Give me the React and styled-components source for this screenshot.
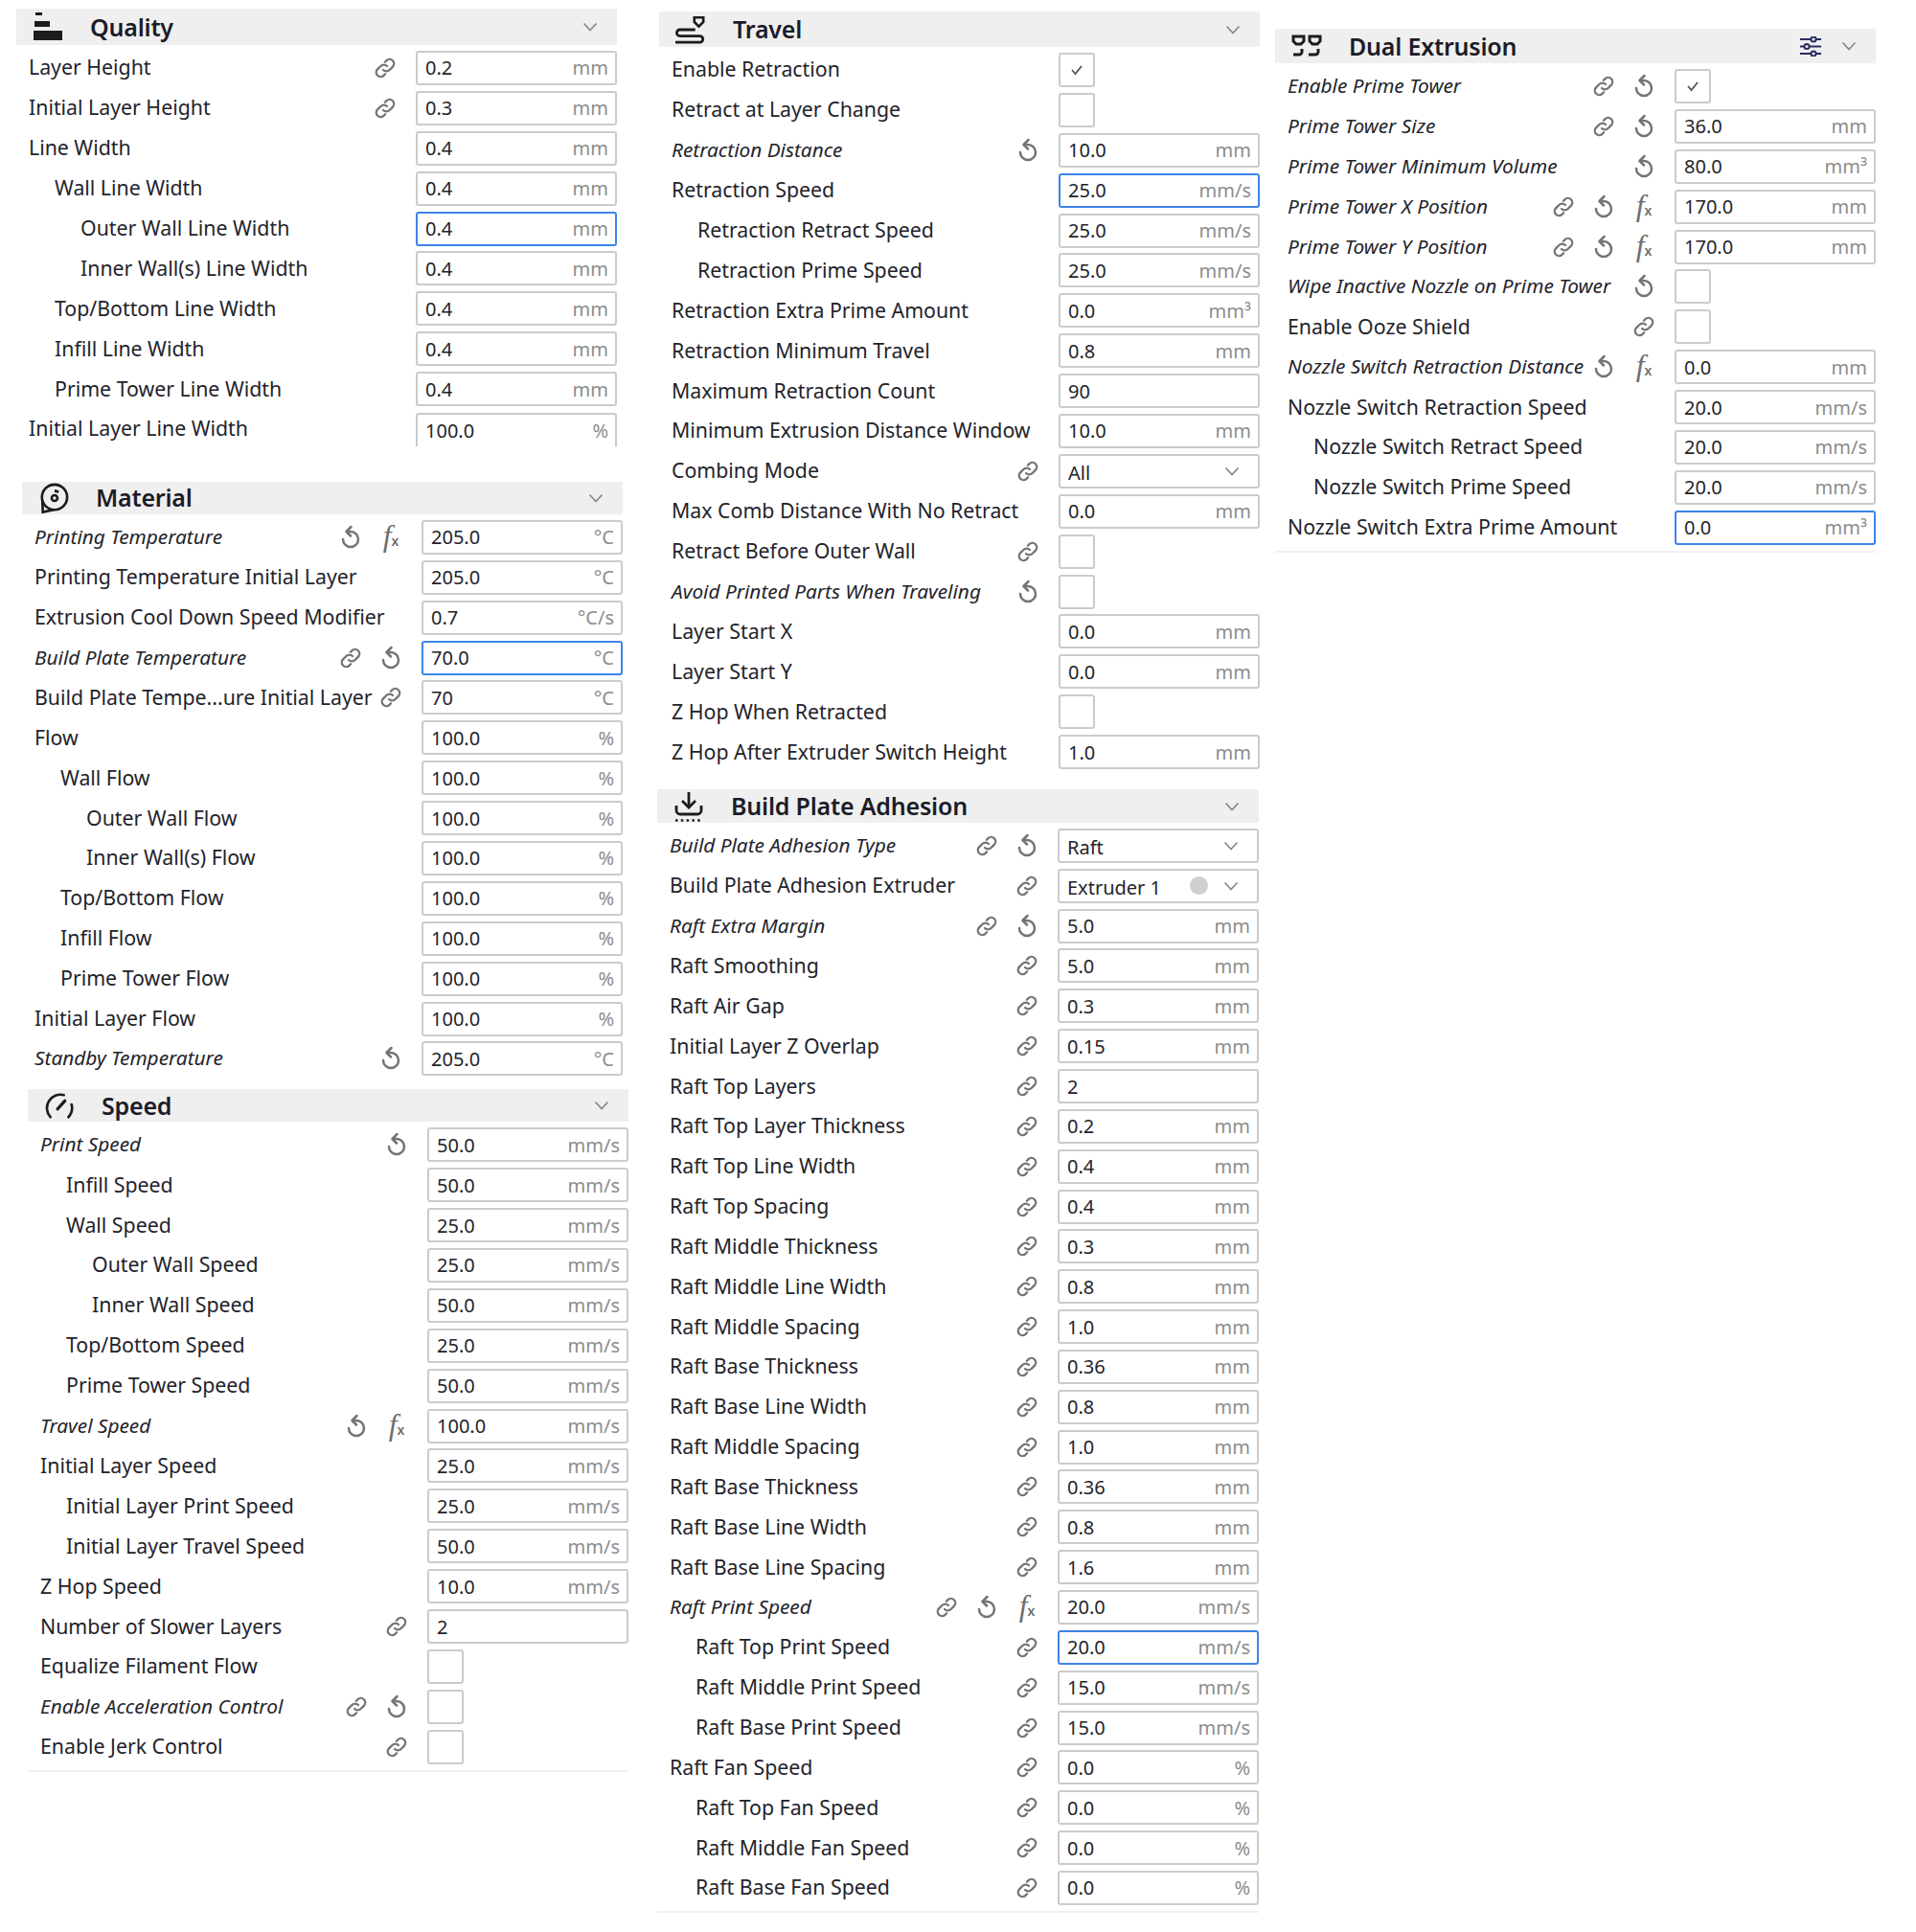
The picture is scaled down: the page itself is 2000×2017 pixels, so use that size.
import React from 'react';
import styled, { createGlobalStyle } from 'styled-components';

const GlobalStyle = createGlobalStyle`
  html, body { margin: 0; padding: 0; background: #fff; }
  body { font-family: "Noto Sans", "Open Sans", sans-serif; color: #23232b; }
`;

const Page = styled.div`
  display: flex;
  width: 2000px;
  height: 2017px;
  overflow: hidden;
  background: #fff;
`;

const Column = styled.div`
  display: flex;
  flex-direction: column;
  width: ${(p) => p.$width}px;
  flex: none;
`;

const Section = styled.section`
  width: ${(p) => p.$width}px;
  margin-left: ${(p) => p.$left}px;
  margin-top: ${(p) => p.$top}px;
  padding-bottom: ${(p) => (p.$ruled ? 3 : 0)}px;
  border-bottom: ${(p) => (p.$ruled ? '2px solid #f0f0f0' : 'none')};
`;

const Header = styled.header`
  display: flex;
  align-items: center;
  height: ${(p) => p.$height}px;
  margin-bottom: 3px;
  background: #efefef;
  color: #1c1c28;
`;

const HeaderIcon = styled.span`
  display: flex;
  align-items: center;
  justify-content: center;
  width: 32px;
  margin-left: 17px;
  margin-right: 28px;
`;

const Title = styled.h2`
  flex: 1;
  margin: 0;
  font-size: 25px;
  font-weight: 600;
  line-height: 1;
  letter-spacing: -0.2px;
`;

const HeaderTool = styled.span`
  display: flex;
  margin-right: 21px;
  color: #262c5e;
`;

const Chevron = styled.svg`
  flex: none;
  width: 16px;
  height: 10px;
  margin-right: ${(p) => p.$right}px;
  fill: none;
  stroke: #8a8a8a;
  stroke-width: 1.8;
`;

const Row = styled.div`
  display: flex;
  align-items: center;
  height: ${(p) => p.$pitch}px;
`;

const Label = styled.span`
  flex: 1;
  min-width: 0;
  padding-left: ${(p) => 13 + p.$level * 27}px;
  padding-bottom: 2px;
  font-size: ${(p) => (p.$italic ? 20.8 : 21.3)}px;
  font-style: ${(p) => (p.$italic ? 'italic' : 'normal')};
  white-space: nowrap;
  color: #23232b;
`;

const Tools = styled.span`
  display: flex;
  flex: none;
  margin-right: 11px;
`;

const Tool = styled.span`
  display: flex;
  align-items: center;
  justify-content: center;
  width: 42px;
  height: 36px;
  color: #747474;
`;

const Fx = styled.span`
  padding-bottom: 4px;
  font-family: "Liberation Serif", serif;
  font-style: italic;
  font-size: 32px;
  line-height: 1;
  color: #6e6e6e;
  & > b {
    font-family: "Liberation Sans", sans-serif;
    font-style: normal;
    font-size: 14px;
    font-weight: 700;
  }
`;

const Field = styled.div`
  display: flex;
  align-items: center;
  justify-content: space-between;
  box-sizing: border-box;
  flex: none;
  width: 210px;
  height: ${(p) => (p.$clipped ? 35 : 36)}px;
  margin-top: ${(p) => (p.$clipped ? 1 : 0)}px;
  padding: 0 7px 0 8px;
  border: 2px solid ${(p) => (p.$focused ? '#3d83e8' : '#cbcbcb')};
  border-bottom-width: ${(p) => (p.$clipped ? 0 : 2)}px;
  border-radius: ${(p) => (p.$clipped ? '3px 3px 0 0' : '3px')};
  background: #fff;
  font-size: 20px;
`;

const Value = styled.span`
  color: #23232b;
`;

const SelectValue = styled(Value)`
  padding-top: 4px;
`;

const Unit = styled.span`
  color: #8d8d8d;
`;

const Dot = styled.span`
  flex: none;
  width: 19px;
  height: 19px;
  margin-left: auto;
  margin-right: 16px;
  border-radius: 50%;
  background: #cfcfcf;
`;

const SelectField = styled(Field)`
  padding-right: 19px;
`;

const Checkbox = styled.div`
  display: flex;
  align-items: center;
  justify-content: center;
  box-sizing: border-box;
  flex: none;
  width: 38px;
  height: 36px;
  margin-right: 172px;
  border: 2px solid #cbcbcb;
  border-radius: 3px;
  background: #fff;
`;

const LinkIcon = () => (
  <svg width="24" height="24" viewBox="0 0 24 24" fill="none" stroke="currentColor" strokeWidth="2.300" strokeLinecap="round">
    <path d="M10 14a4.6 4.6 0 0 0 6.6 0l3.4-3.4a4.6 4.6 0 0 0-6.5-6.5l-1.6 1.6" />
    <path d="M14 10a4.6 4.6 0 0 0-6.6 0L4 13.4a4.6 4.6 0 0 0 6.5 6.500l1.6-1.600" />
  </svg>
);

const ResetIcon = () => (
  <svg width="22" height="26" viewBox="0 0 22 26" fill="none" stroke="currentColor" strokeWidth="2.500" strokeLinecap="round" strokeLinejoin="round">
    <path d="M7 7h4a8 8 0 1 1-8 8" />
    <path d="M11.500 2L6.500 7l4.500 4.500" />
  </svg>
);

const FxIcon = () => (
  <Fx>
    f<b>x</b>
  </Fx>
);

const CheckIcon = () => (
  <svg width="14" height="12" viewBox="0 0 14 12" fill="none" stroke="#555" strokeWidth="1.800">
    <path d="M2 6l3.500 4L12 2" />
  </svg>
);

const ChevronDown = ({ right = 20 }) => (
  <Chevron $right={right} viewBox="0 0 16 10">
    <path d="M1.500 1.500L8 8.500l6.500-7" />
  </Chevron>
);

const QualityIcon = () => (
  <svg width="30" height="30" viewBox="0 0 30 30" fill="#1c1c1c">
    <rect x="2" y="0" width="7" height="3" />
    <rect x="1" y="9" width="16" height="6" />
    <rect x="0" y="19" width="30" height="10" />
  </svg>
);

const MaterialIcon = () => (
  <svg width="34" height="34" viewBox="0 0 34 34" fill="none" stroke="#1c1c1c" strokeWidth="2.800">
    <circle cx="18" cy="16" r="14" />
    <circle cx="18" cy="17" r="3.200" />
    <path d="M18 9a8 8 0 0 1 4.500 1.500" strokeWidth="3" />
    <path d="M4.500 20L5 32.500 17 30" />
  </svg>
);

const SpeedIcon = () => (
  <svg width="34" height="28" viewBox="0 0 34 28" fill="none" stroke="#1c1c1c" strokeWidth="2.800" strokeLinecap="round">
    <path d="M7 27A15 15 0 0 1 22 2.500" />
    <path d="M27 27a15 15 0 0 0 3.500-14" />
    <path d="M15 18l8-9" strokeWidth="3.500" />
  </svg>
);

const TravelIcon = () => (
  <svg width="34" height="32" viewBox="0 0 34 32" fill="none" stroke="#1c1c1c" strokeWidth="3">
    <path d="M21 2.500h10v5l-5 5-5-5z" strokeWidth="2.800" />
    <path d="M22 16H5a3.500 3.500 0 0 0 0 7h22a3.500 3.500 0 0 1 0 7H0" />
  </svg>
);

const AdhesionIcon = () => (
  <svg width="30" height="32" viewBox="0 0 30 32" fill="none" stroke="#1c1c1c" strokeWidth="2.800">
    <path d="M15 1v15" />
    <path d="M8 10l7 7 7-7" />
    <path d="M2 15v5a4 4 0 0 0 4 4h18a4 4 0 0 0 4-4v-5" />
    <path d="M1 30.500h28" strokeWidth="2.400" strokeDasharray="2.500 3.300" />
  </svg>
);

const DualIcon = () => (
  <svg width="32" height="24" viewBox="0 0 32 24" fill="none" stroke="#1c1c1c" strokeWidth="3">
    <path d="M2 2h11v5l-3 3H5L2 7z" />
    <path d="M19 2h11v5l-3 3h-5l-3-3z" />
    <path d="M11 15v3a3 3 0 0 1-3 3H2" />
    <path d="M28 15v3a3 3 0 0 1-3 3h-7" />
  </svg>
);

const SlidersIcon = () => (
  <svg width="22" height="21" viewBox="0 0 22 21" fill="#efefef" stroke="currentColor" strokeWidth="2">
    <path d="M0 3h22M0 10.500h22M0 18h22" />
    <circle cx="14" cy="3" r="2.600" />
    <circle cx="7" cy="10.500" r="2.600" />
    <circle cx="14" cy="18" r="2.600" />
  </svg>
);

// l = link, r = reset, f = formula
const TOOL_ICONS = { l: LinkIcon, r: ResetIcon, f: FxIcon };

const row = (name, value, unit, opts = {}) => ({ name, value, unit, ...opts });
const sub = (name, value, unit, opts = {}) => row(name, value, unit, { level: 1, ...opts });
const sub2 = (name, value, unit, opts = {}) => row(name, value, unit, { level: 2, ...opts });
const check = (name, checked, opts = {}) => ({ name, kind: 'check', checked, ...opts });
const select = (name, value, opts = {}) => ({ name, kind: 'select', value, ...opts });

const quality = [
  row('Layer Height', '0.2', 'mm', { tools: 'l' }),
  row('Initial Layer Height', '0.3', 'mm', { tools: 'l' }),
  row('Line Width', '0.4', 'mm'),
  sub('Wall Line Width', '0.4', 'mm'),
  sub2('Outer Wall Line Width', '0.4', 'mm', { focused: true }),
  sub2('Inner Wall(s) Line Width', '0.4', 'mm'),
  sub('Top/Bottom Line Width', '0.4', 'mm'),
  sub('Infill Line Width', '0.4', 'mm'),
  sub('Prime Tower Line Width', '0.4', 'mm'),
  row('Initial Layer Line Width', '100.0', '%', { clipped: true }),
];

const material = [
  row('Printing Temperature', '205.0', '°C', { italic: true, tools: 'rf' }),
  row('Printing Temperature Initial Layer', '205.0', '°C'),
  row('Extrusion Cool Down Speed Modifier', '0.7', '°C/s'),
  row('Build Plate Temperature', '70.0', '°C', { italic: true, tools: 'lr', focused: true }),
  row('Build Plate Tempe...ure Initial Layer', '70', '°C', { tools: 'l' }),
  row('Flow', '100.0', '%'),
  sub('Wall Flow', '100.0', '%'),
  sub2('Outer Wall Flow', '100.0', '%'),
  sub2('Inner Wall(s) Flow', '100.0', '%'),
  sub('Top/Bottom Flow', '100.0', '%'),
  sub('Infill Flow', '100.0', '%'),
  sub('Prime Tower Flow', '100.0', '%'),
  row('Initial Layer Flow', '100.0', '%'),
  row('Standby Temperature', '205.0', '°C', { italic: true, tools: 'r' }),
];

const speed = [
  row('Print Speed', '50.0', 'mm/s', { italic: true, tools: 'r' }),
  sub('Infill Speed', '50.0', 'mm/s'),
  sub('Wall Speed', '25.0', 'mm/s'),
  sub2('Outer Wall Speed', '25.0', 'mm/s'),
  sub2('Inner Wall Speed', '50.0', 'mm/s'),
  sub('Top/Bottom Speed', '25.0', 'mm/s'),
  sub('Prime Tower Speed', '50.0', 'mm/s'),
  row('Travel Speed', '100.0', 'mm/s', { italic: true, tools: 'rf' }),
  row('Initial Layer Speed', '25.0', 'mm/s'),
  sub('Initial Layer Print Speed', '25.0', 'mm/s'),
  sub('Initial Layer Travel Speed', '50.0', 'mm/s'),
  row('Z Hop Speed', '10.0', 'mm/s'),
  row('Number of Slower Layers', '2', '', { tools: 'l' }),
  check('Equalize Filament Flow', false),
  check('Enable Acceleration Control', false, { italic: true, tools: 'lr' }),
  check('Enable Jerk Control', false, { tools: 'l' }),
];

const travel = [
  check('Enable Retraction', true),
  check('Retract at Layer Change', false),
  row('Retraction Distance', '10.0', 'mm', { italic: true, tools: 'r' }),
  row('Retraction Speed', '25.0', 'mm/s', { focused: true }),
  sub('Retraction Retract Speed', '25.0', 'mm/s'),
  sub('Retraction Prime Speed', '25.0', 'mm/s'),
  row('Retraction Extra Prime Amount', '0.0', 'mm³'),
  row('Retraction Minimum Travel', '0.8', 'mm'),
  row('Maximum Retraction Count', '90', ''),
  row('Minimum Extrusion Distance Window', '10.0', 'mm'),
  select('Combing Mode', 'All', { tools: 'l' }),
  row('Max Comb Distance With No Retract', '0.0', 'mm'),
  check('Retract Before Outer Wall', false, { tools: 'l' }),
  check('Avoid Printed Parts When Traveling', false, { italic: true, tools: 'r' }),
  row('Layer Start X', '0.0', 'mm'),
  row('Layer Start Y', '0.0', 'mm'),
  check('Z Hop When Retracted', false),
  row('Z Hop After Extruder Switch Height', '1.0', 'mm'),
];

const link = { tools: 'l' };
const adhesion = [
  select('Build Plate Adhesion Type', 'Raft', { italic: true, tools: 'lr' }),
  select('Build Plate Adhesion Extruder', 'Extruder 1', { tools: 'l', dot: true }),
  row('Raft Extra Margin', '5.0', 'mm', { italic: true, tools: 'lr' }),
  row('Raft Smoothing', '5.0', 'mm', link),
  row('Raft Air Gap', '0.3', 'mm', link),
  row('Initial Layer Z Overlap', '0.15', 'mm', link),
  row('Raft Top Layers', '2', '', link),
  row('Raft Top Layer Thickness', '0.2', 'mm', link),
  row('Raft Top Line Width', '0.4', 'mm', link),
  row('Raft Top Spacing', '0.4', 'mm', link),
  row('Raft Middle Thickness', '0.3', 'mm', link),
  row('Raft Middle Line Width', '0.8', 'mm', link),
  row('Raft Middle Spacing', '1.0', 'mm', link),
  row('Raft Base Thickness', '0.36', 'mm', link),
  row('Raft Base Line Width', '0.8', 'mm', link),
  row('Raft Middle Spacing', '1.0', 'mm', link),
  row('Raft Base Thickness', '0.36', 'mm', link),
  row('Raft Base Line Width', '0.8', 'mm', link),
  row('Raft Base Line Spacing', '1.6', 'mm', link),
  row('Raft Print Speed', '20.0', 'mm/s', { italic: true, tools: 'lrf' }),
  sub('Raft Top Print Speed', '20.0', 'mm/s', { tools: 'l', focused: true }),
  sub('Raft Middle Print Speed', '15.0', 'mm/s', link),
  sub('Raft Base Print Speed', '15.0', 'mm/s', link),
  row('Raft Fan Speed', '0.0', '%', link),
  sub('Raft Top Fan Speed', '0.0', '%', link),
  sub('Raft Middle Fan Speed', '0.0', '%', link),
  sub('Raft Base Fan Speed', '0.0', '%', link),
];

const dual = [
  check('Enable Prime Tower', true, { italic: true, tools: 'lr' }),
  row('Prime Tower Size', '36.0', 'mm', { italic: true, tools: 'lr' }),
  row('Prime Tower Minimum Volume', '80.0', 'mm³', { italic: true, tools: 'r' }),
  row('Prime Tower X Position', '170.0', 'mm', { italic: true, tools: 'lrf' }),
  row('Prime Tower Y Position', '170.0', 'mm', { italic: true, tools: 'lrf' }),
  check('Wipe Inactive Nozzle on Prime Tower', false, { italic: true, tools: 'r' }),
  check('Enable Ooze Shield', false, { tools: 'l' }),
  row('Nozzle Switch Retraction Distance', '0.0', 'mm', { italic: true, tools: 'rf' }),
  row('Nozzle Switch Retraction Speed', '20.0', 'mm/s'),
  sub('Nozzle Switch Retract Speed', '20.0', 'mm/s'),
  sub('Nozzle Switch Prime Speed', '20.0', 'mm/s'),
  row('Nozzle Switch Extra Prime Amount', '0.0', 'mm³', { focused: true }),
];

const Control = ({ item }) => {
  if (item.kind === 'check') {
    return <Checkbox>{item.checked && <CheckIcon />}</Checkbox>;
  }
  if (item.kind === 'select') {
    return (
      <SelectField>
        <SelectValue>{item.value}</SelectValue>
        {item.dot && <Dot />}
        <ChevronDown right={0} />
      </SelectField>
    );
  }
  return (
    <Field $focused={item.focused} $clipped={item.clipped}>
      <Value>{item.value}</Value>
      <Unit>{item.unit}</Unit>
    </Field>
  );
};

const SettingRow = ({ item, pitch }) => (
  <Row $pitch={pitch}>
    <Label $level={item.level || 0} $italic={item.italic}>
      {item.name}
    </Label>
    <Tools>
      {(item.tools || '').split('').map((t) => {
        const Icon = TOOL_ICONS[t];
        return (
          <Tool key={t}>
            <Icon />
          </Tool>
        );
      })}
    </Tools>
    <Control item={item} />
  </Row>
);

const SettingsSection = ({ title, icon, rows, left, top, height, ruled, tool, width = 627, pitch = 41.9 }) => (
  <Section $left={left} $top={top} $ruled={ruled} $width={width}>
    <Header $height={height}>
      <HeaderIcon>{icon}</HeaderIcon>
      <Title>{title}</Title>
      {tool && <HeaderTool>{tool}</HeaderTool>}
      <ChevronDown />
    </Header>
    {rows.map((item, i) => (
      <SettingRow key={i} item={item} pitch={pitch} />
    ))}
  </Section>
);

const App = () => (
  <Page>
    <GlobalStyle />
    <Column $width={670}>
      <SettingsSection title="Quality" icon={<QualityIcon />} rows={quality} left={17} top={9} height={38} />
      <SettingsSection title="Material" icon={<MaterialIcon />} rows={material} left={23} top={34} height={34} />
      <SettingsSection title="Speed" icon={<SpeedIcon />} rows={speed} left={29} top={11} height={34} ruled />
    </Column>
    <Column $width={660}>
      <SettingsSection title="Travel" icon={<TravelIcon />} rows={travel} left={18} top={12} height={37} />
      <SettingsSection
        title="Build Plate Adhesion"
        icon={<AdhesionIcon />}
        rows={adhesion}
        left={16}
        top={18}
        height={35}
        width={628}
        pitch={41.85}
        ruled
      />
    </Column>
    <Column $width={670}>
      <SettingsSection
        title="Dual Extrusion"
        icon={<DualIcon />}
        rows={dual}
        left={1}
        top={30}
        height={36}
        ruled
        tool={<SlidersIcon />}
      />
    </Column>
  </Page>
);

export default App;
